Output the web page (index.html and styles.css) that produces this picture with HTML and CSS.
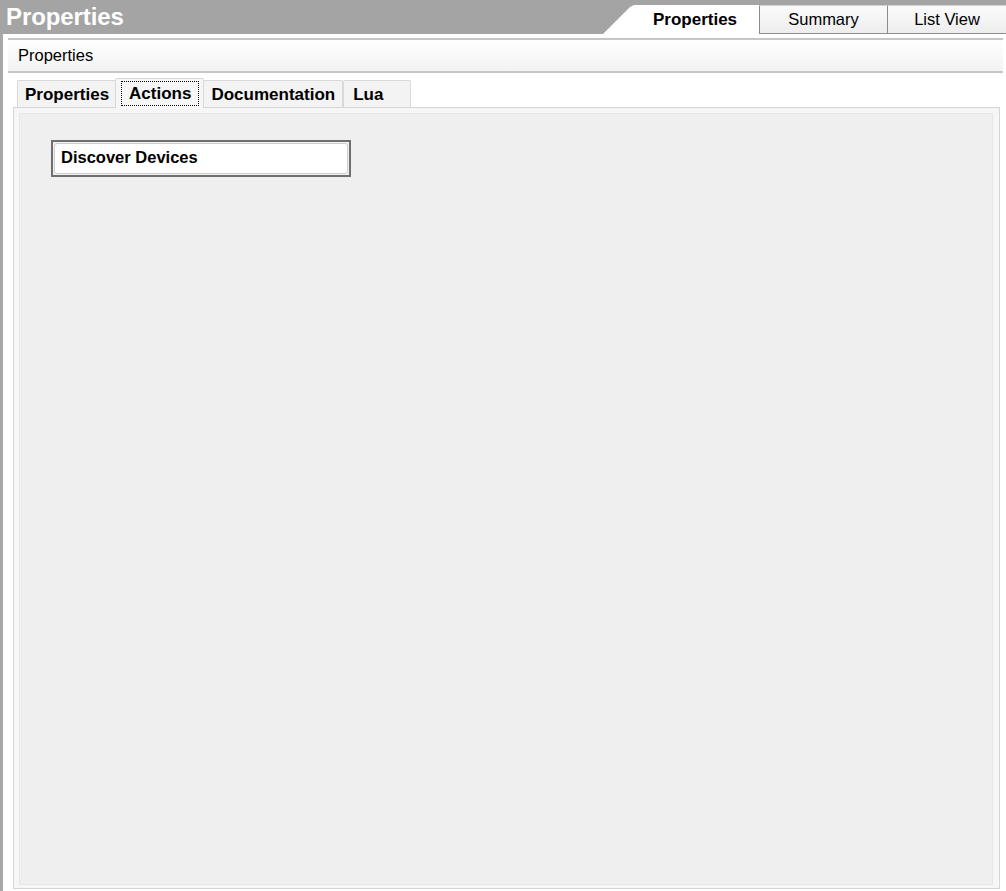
FILE: index.html
```html
<!DOCTYPE html>
<html lang="en">
<head>
  <meta charset="UTF-8">
  <title>Properties</title>
  <link rel="stylesheet" href="styles.css">
</head>
<body>
  <div class="window">
    <!-- Title bar with view switcher -->
    <div class="titlebar">
      <div class="title">Properties</div>
      <div class="view-tabs">
        <div class="view-tab active">Properties</div>
        <div class="view-tab summary">Summary</div>
        <div class="view-tab list">List View</div>
      </div>
    </div>

    <div class="content">
      <div class="subheader">Properties</div>

      <!-- Inner tabs -->
      <div class="tabs">
        <div class="tab">Properties</div>
        <div class="tab selected"><span class="focus">Actions</span></div>
        <div class="tab">Documentation</div>
        <div class="tab lua">Lua</div>
      </div>

      <div class="panel">
        <div class="panel-inner">
          <div class="action-box">
            <div class="action-btn">Discover Devices</div>
          </div>
        </div>
      </div>
    </div>
  </div>
</body>
</html>
```

FILE: styles.css
```css
body {
  margin: 0;
  font-family: "Liberation Sans", Arial, sans-serif;
  background: #fff;
  color: #000;
}

.window {
  height: 100vh;
  display: flex;
  flex-direction: column;
}

/* Title bar */
.titlebar {
  height: 34px;
  flex-shrink: 0;
  background: #a4a4a4;
  display: flex;
  align-items: flex-end;
}

.title {
  align-self: stretch;
  color: #fff;
  font-weight: bold;
  font-size: 24px;
  line-height: 34px;
  padding-left: 6px;
  letter-spacing: -0.1px;
}

.view-tabs {
  margin-left: auto;
  display: flex;
  height: 29px;
}

.view-tab {
  box-sizing: border-box;
  text-align: center;
  font-size: 16.5px;
  line-height: 27px;
  background: linear-gradient(#fbfbfb, #ededed);
  border-top: 1px solid #d2d2d2;
  border-left: 1px solid #8c8c8c;
  border-bottom: 1px solid #8c8c8c;
}

.view-tab.active {
  width: 156px;
  padding-left: 28px;
  background: #fff;
  border: none;
  font-weight: bold;
  font-size: 17px;
  line-height: 29px;
  clip-path: polygon(0 100%, 27px 2px, 31px 0, 100% 0, 100% 100%);
}

.view-tab.summary {
  width: 128px;
}

.view-tab.list {
  width: 119px;
}

/* Main area */
.content {
  flex: 1;
  display: flex;
  flex-direction: column;
  border-left: 3px solid #a8a8a8;
  padding: 4px 3px 2px 5px;
}

.subheader {
  border-top: 2px solid #c6c6c6;
  border-bottom: 2px solid #c6c6c6;
  background: linear-gradient(#fefefe, #f3f3f3);
  font-size: 16.5px;
  line-height: 31px;
  padding-left: 10px;
}

/* Inner tabs */
.tabs {
  display: flex;
  align-items: flex-end;
  margin: 5px 3px 0 5px;
  padding-left: 4px;
  position: relative;
  z-index: 1;
}

.tab {
  box-sizing: border-box;
  height: 27px;
  border: 1px solid #d9d9d9;
  border-bottom: none;
  border-radius: 2px 2px 0 0;
  background: #f3f3f3;
  font-size: 17px;
  font-weight: bold;
  line-height: 28px;
  padding: 0 7px;
}

.tab.selected {
  height: 30px;
  margin: 0 -1px -1px -2px;
  padding: 2px 4px 0 5px;
  background: #f6f6f6;
  line-height: 23px;
}

.tab.lua {
  min-width: 68px;
  padding-left: 9px;
}

.focus {
  display: inline-block;
  border: 1px dotted #000;
  padding: 0 7px;
}

/* Tab page */
.panel {
  flex: 1;
  display: flex;
  margin: 0 3px 0 5px;
  border: 1px solid #d5d5d5;
  background: #f6f6f6;
  padding: 5px 6px 3px 5px;
}

.panel-inner {
  flex: 1;
  background: #efefef;
  border: 1px solid #e6e6e6;
  padding: 26px 0 0 31px;
}

.action-box {
  width: 300px;
  box-sizing: border-box;
  border: 2px solid #6f6f6f;
  padding: 1px;
  background: #f0f0f0;
}

.action-btn {
  height: 28px;
  padding: 0 0 1px 6px;
  background: #fff;
  border: 1px solid #cfcfcf;
  border-radius: 3px;
  font-weight: bold;
  font-size: 16.5px;
  line-height: 27px;
}
```
